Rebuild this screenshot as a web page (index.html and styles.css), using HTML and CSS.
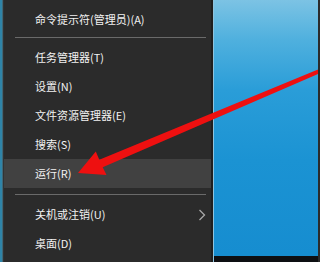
FILE: index.html
```html
<!DOCTYPE html>
<html lang="zh-CN">
<head>
<meta charset="utf-8">
<title>Win+X 菜单</title>
<link rel="stylesheet" href="styles.css">
</head>
<body>
<div class="screen">
  <div class="edge"></div>
  <div class="menu">
    <div class="item">命令提示符(管理员)(A)</div>
    <div class="sep sep-a"></div>
    <div class="item">任务管理器(T)</div>
    <div class="item">设置(N)</div>
    <div class="item">文件资源管理器(E)</div>
    <div class="item">搜索(S)</div>
    <div class="item active">运行(R)</div>
    <div class="sep sep-b"></div>
    <div class="item sub">关机或注销(U)
      <svg class="chev" width="8" height="12" viewBox="0 0 8 12"><polyline points="1.5,1 6.5,6 1.5,11" fill="none" stroke="#a8a8a8" stroke-width="1.3"/></svg>
    </div>
    <div class="item">桌面(D)</div>
  </div>
  <div class="menu-shade"></div>
  <div class="menu-line"></div>
  <div class="desktop">
    <div class="taskbar"></div>
  </div>
  <svg class="arrow" width="318" height="262" viewBox="0 0 318 262">
    <polygon fill="#ee1010" points="78,173 106.5,175 102.7,167.2 330.8,68.5 329.2,64.8 99.3,159.8 95.8,151.5"/>
  </svg>
</div>
</body>
</html>
```
FILE: styles.css
```css
html, body {
  margin: 0;
  padding: 0;
  width: 318px;
  height: 262px;
  overflow: hidden;
  background: #2b2b2b;
}
.screen {
  position: relative;
  display: flex;
  width: 318px;
  height: 262px;
  font-family: "Noto Sans CJK SC", "Noto Sans", sans-serif;
}
.edge {
  width: 4px;
  flex: none;
  background: linear-gradient(to right, #2f84a8 0, #2f84a8 2px, #3f6878 2px, #3f6878 3px, #333 3px);
}
.menu {
  width: 207px;
  flex: none;
  background: #2b2b2b;
  padding-top: 5px;
  box-sizing: border-box;
}
.item {
  height: 29px;
  line-height: 29px;
  padding-left: 31px;
  font-size: 11px;
  color: #f2f2f2;
  display: flex;
  align-items: center;
  white-space: nowrap;
}
.item.active {
  background: #414141;
}
.item.sub {
  justify-content: space-between;
  padding-right: 5px;
}
.chev {
  display: block;
}
.sep {
  height: 1px;
  background: #6a6a6a;
  margin-left: 11px;
  margin-right: 5px;
}
.sep-a {
  margin-top: 3px;
  margin-bottom: 5px;
}
.sep-b {
  margin-top: 6px;
  margin-bottom: 5px;
}
.menu-shade {
  width: 2px;
  flex: none;
  background: #1f1f1f;
}
.menu-line {
  width: 1px;
  flex: none;
  background: #8fc3dd;
}
.desktop {
  flex: 1;
  display: flex;
  flex-direction: column;
  justify-content: flex-end;
  background: linear-gradient(to bottom, #7cc3e4 0, #4fb0de 40px, #2a9dd8 90px, #1b93d3 160px, #168dd0 255px);
}
.taskbar {
  height: 6px;
  background: #0d0f12;
}
.arrow {
  position: absolute;
  left: 0;
  top: 0;
}
```
